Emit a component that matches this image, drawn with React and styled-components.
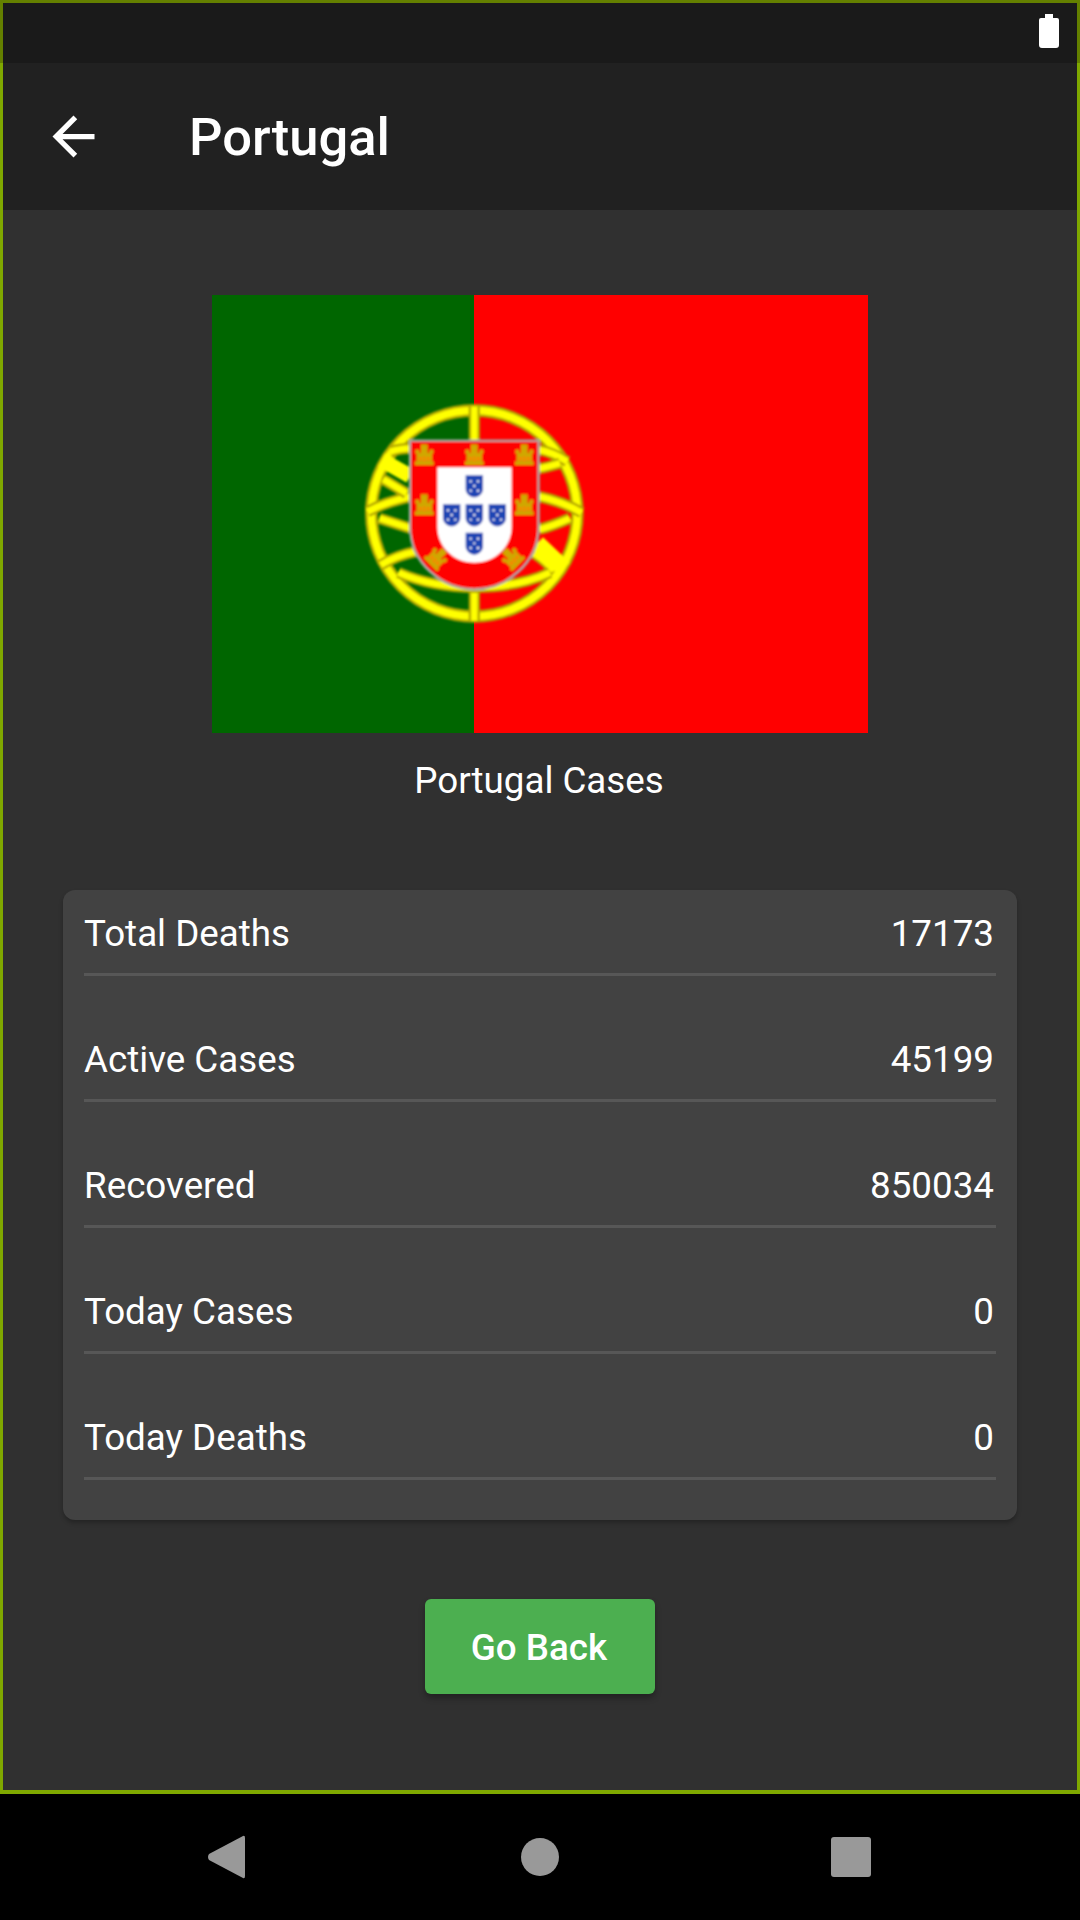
import React from 'react'
import styled, { createGlobalStyle } from 'styled-components'

const GlobalStyle = createGlobalStyle`
  html, body {
    margin: 0;
    padding: 0;
    background: #000;
  }
  * {
    box-sizing: border-box;
  }
`

const stats = [
  { label: 'Total Deaths', value: 17173 },
  { label: 'Active Cases', value: 45199 },
  { label: 'Recovered', value: 850034 },
  { label: 'Today Cases', value: 0 },
  { label: 'Today Deaths', value: 0 },
]

// ring and band pieces, in crop coordinates of the emblem
const bands = [
  'M403 80 V180',
  'M403 630 V722',
  'M150 215 C170 208 190 205 212 205',
  'M598 210 C630 215 655 228 682 245',
  'M598 265 C620 262 640 256 660 250',
  'M82 395 C120 375 165 360 212 350',
  'M118 415 C150 425 180 435 212 445',
  'M122 555 C155 535 190 522 228 515',
  'M598 350 C645 360 690 378 725 398',
  'M598 448 C630 440 660 428 690 415',
  'M582 520 C605 535 625 552 642 572',
  'M175 578 C250 610 330 622 403 622 C480 622 560 610 630 578',
  'M130 298 L200 340',
]

const castles = [
  { x: 253, y: 225, r: 0 },
  { x: 403, y: 225, r: 0 },
  { x: 553, y: 225, r: 0 },
  { x: 253, y: 375, r: 0 },
  { x: 553, y: 375, r: 0 },
  { x: 292, y: 533, r: 45 },
  { x: 515, y: 533, r: -45 },
]

const quinas = [
  { x: 403, y: 318 },
  { x: 335, y: 405 },
  { x: 403, y: 405 },
  { x: 472, y: 405 },
  { x: 403, y: 490 },
]

const Flag = () => (
  <FlagSvg viewBox='0 0 656 438'>
    <defs>
      <filter id='soft' x='-5%' y='-5%' width='110%' height='110%'>
        <feGaussianBlur stdDeviation='2.6' />
      </filter>
    </defs>
    <rect width='262' height='438' fill='#006600' />
    <rect x='262' width='394' height='438' fill='#ff0000' />
    <g transform='translate(128 85) scale(0.3333)' filter='url(#soft)'>
      <circle cx='403' cy='400' r='309' fill='none' stroke='#b5a800' strokeWidth='38' />
      <circle cx='403' cy='400' r='309' fill='none' stroke='#ffff00' strokeWidth='22' />
      {bands.map((d) => (
        <g key={d} fill='none'>
          <path d={d} stroke='#b5a800' strokeWidth='34' />
          <path d={d} stroke='#ffff00' strokeWidth='19' />
        </g>
      ))}
      <path d='M125 240 L210 288' stroke='#ffff00' strokeWidth='44' fill='none' />
      <path d='M592 490 L672 566' stroke='#ffff00' strokeWidth='50' fill='none' />
      <path
        d='M210 182 H596 V440 C596 550 500 628 403 628 C306 628 210 550 210 440 Z'
        fill='#ff0000'
        stroke='#a8a8a8'
        strokeWidth='7'
      />
      <path
        d='M292 262 H515 V440 C515 500 465 548 403 548 C341 548 292 500 292 440 Z'
        fill='#ffffff'
      />
      {castles.map((c) => (
        <g key={`${c.x}-${c.y}`} transform={`translate(${c.x} ${c.y}) rotate(${c.r})`} fill='#cfa800'>
          <rect x='-28' y='19' width='56' height='11' />
          <rect x='-23' y='-6' width='46' height='26' />
          <rect x='-10' y='-32' width='20' height='28' />
          <rect x='-27' y='-16' width='12' height='12' />
          <rect x='15' y='-16' width='12' height='12' />
          <rect x='-16' y='6' width='8' height='10' fill='#ff8000' />
          <rect x='8' y='6' width='8' height='10' fill='#ff8000' />
          <rect x='-3' y='4' width='6' height='15' fill='#ff8000' />
        </g>
      ))}
      {quinas.map((q) => (
        <g key={`${q.x}-${q.y}`} transform={`translate(${q.x} ${q.y})`}>
          <path d='M-26 -32 H26 V8 C26 24 12 34 0 34 C-12 34 -26 24 -26 8 Z' fill='#1c45b4' />
          <circle cx='-11' cy='-14' r='3.5' fill='#fff' />
          <circle cx='11' cy='-14' r='3.5' fill='#fff' />
          <circle cx='0' cy='0' r='3.5' fill='#fff' />
          <circle cx='-11' cy='14' r='3.5' fill='#fff' />
          <circle cx='11' cy='14' r='3.5' fill='#fff' />
        </g>
      ))}
    </g>
  </FlagSvg>
)

const App = () => {
  return (
    <Wrapper>
      <GlobalStyle />
      <StatusBar>
        <svg width='20' height='34' viewBox='0 0 20 34'>
          <path
            d='M6 0 H14 V4 H18 Q20 4 20 6 V31 Q20 34 17 34 H3 Q0 34 0 31 V6 Q0 4 2 4 H6 Z'
            fill='#fff'
          />
        </svg>
      </StatusBar>
      <Main>
        <AppBar>
          <BackIcon viewBox='0 0 24 24'>
            <path
              d='M20 11H7.83l5.59-5.59L12 4l-8 8 8 8 1.41-1.41L7.83 13H20v-2z'
              fill='#fff'
            />
          </BackIcon>
          <Title>Portugal</Title>
        </AppBar>
        <Content>
          <Flag />
          <Caption>Portugal Cases</Caption>
          <Card>
            {stats.map((s) => (
              <Row key={s.label}>
                <span>{s.label}</span>
                <span>{s.value}</span>
              </Row>
            ))}
          </Card>
          <GoBack>Go Back</GoBack>
        </Content>
      </Main>
      <NavBar>
        <svg width='38' height='44' viewBox='0 0 38 44'>
          <path
            d='M36 1 Q38 0 38 3 V41 Q38 44 36 43 L2 25 Q0 22 2 19 Z'
            fill='#999'
          />
        </svg>
        <HomeIcon viewBox='0 0 38 38'>
          <circle cx='19' cy='19' r='19' fill='#999' />
        </HomeIcon>
        <svg width='40' height='40' viewBox='0 0 40 40'>
          <rect width='40' height='40' rx='3' fill='#999' />
        </svg>
      </NavBar>
    </Wrapper>
  )
}

const Wrapper = styled.div`
  width: 1080px;
  height: 1920px;
  display: flex;
  flex-direction: column;
  background: #000;
  font-family: Roboto, 'Liberation Sans', sans-serif;
  color: #fff;
  overflow: hidden;
`

const StatusBar = styled.div`
  height: 63px;
  flex-shrink: 0;
  display: flex;
  justify-content: flex-end;
  align-items: flex-start;
  padding: 11px 18px 0 0;
  background: #1a1a1a;
  border: solid #648000;
  border-width: 3px 3px 0;
`

const Main = styled.main`
  flex: 1;
  display: flex;
  flex-direction: column;
  background: #303030;
  border: solid #7fa800;
  border-width: 0 3px 4px;
`

const AppBar = styled.header`
  height: 147px;
  flex-shrink: 0;
  display: flex;
  align-items: center;
  padding-left: 39px;
  background: #212121;
`

const BackIcon = styled.svg`
  width: 63px;
  height: 63px;
`

const Title = styled.h1`
  margin: 2px 0 0 84px;
  font-size: 52.5px;
  font-weight: 500;
  line-height: 1;
`

const Content = styled.div`
  flex: 1;
  display: flex;
  flex-direction: column;
  align-items: center;
  padding-top: 85px;
`

const FlagSvg = styled.svg`
  display: block;
  width: 656px;
  height: 438px;
  flex-shrink: 0;
`

const Caption = styled.p`
  margin: 27px 2px 0 0;
  font-size: 36.75px;
  line-height: 42px;
`

const Card = styled.section`
  width: 954px;
  margin-top: 88px;
  padding: 0 21px 40px;
  display: flex;
  flex-direction: column;
  gap: 40px;
  background: #424242;
  border-radius: 12px;
  box-shadow: 0 3px 4px rgba(0, 0, 0, 0.25);
`

const Row = styled.div`
  height: 86px;
  display: flex;
  justify-content: space-between;
  align-items: center;
  padding: 3px 2px 0 0;
  font-size: 36.75px;
  border-bottom: 3px solid #575757;
`

const GoBack = styled.button`
  width: 230px;
  height: 95px;
  margin-top: 79px;
  padding: 2px 2px 0 0;
  border: 0;
  border-radius: 6px;
  background: #4caf50;
  color: #fff;
  font-family: inherit;
  font-size: 36.75px;
  font-weight: 500;
  box-shadow: 0 4px 6px rgba(0, 0, 0, 0.3);
`

const HomeIcon = styled.svg`
  width: 38px;
  height: 38px;
  margin: 0 272px 0 276px;
`

const NavBar = styled.nav`
  height: 126px;
  flex-shrink: 0;
  display: flex;
  align-items: center;
  padding-left: 207px;
  background: #000;
`

export default App
